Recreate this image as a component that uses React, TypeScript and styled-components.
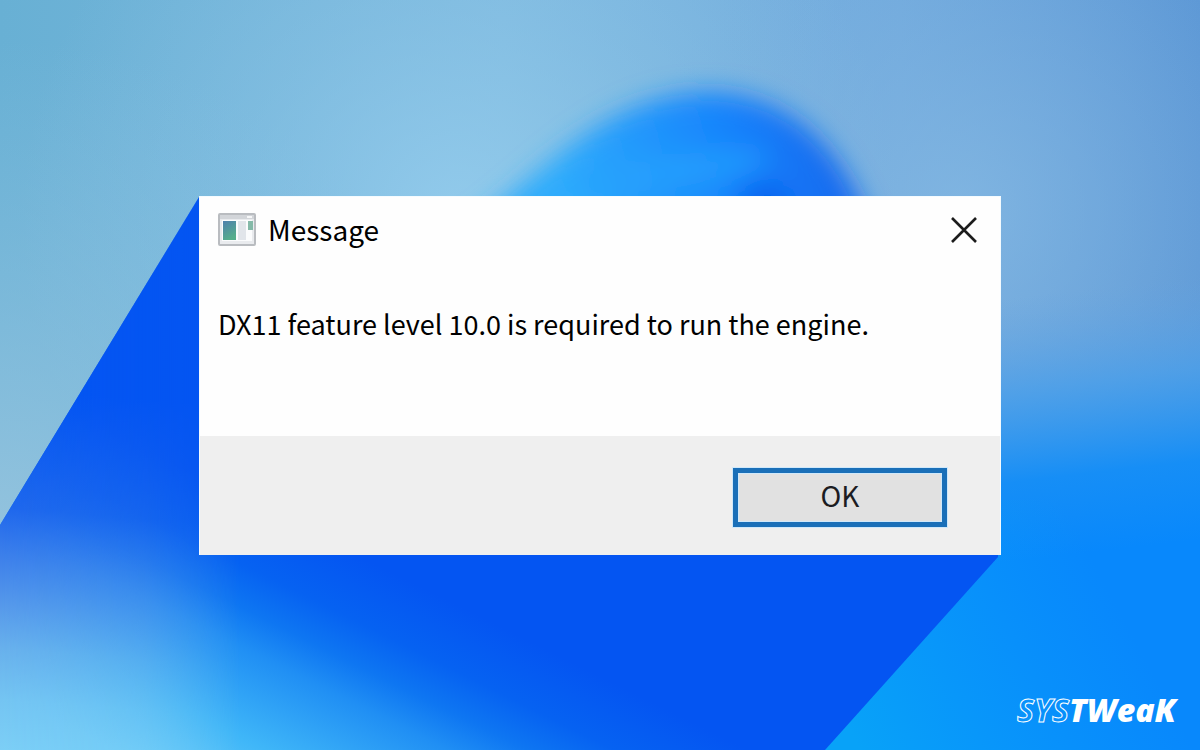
import React from "react";
import styled, { createGlobalStyle } from "styled-components";

const GlobalStyle = createGlobalStyle`
  * { box-sizing: border-box; }
  html, body, #root { height: 100%; }
  body { margin: 0; background: #7db3df; }
`;

const Desktop = styled.div`
  position: relative;
  isolation: isolate;
  min-height: 100%;
  display: grid;
  grid-template-columns: minmax(0, 1fr);
  grid-template-rows: minmax(80px, 1fr) auto minmax(80px, 1fr);
  justify-items: center;
  font-family: "Noto Sans CJK SC", "Open Sans", sans-serif;
  color: #000;
`;

const WallpaperArt = styled.svg`
  position: absolute;
  inset: 0;
  z-index: -1;
  width: 100%;
  height: 100%;
`;

const Dialog = styled.section`
  grid-row: 2;
  width: 100%;
  max-width: 802px;
  background: #fefefe;
  border: 1px solid #f4fbff;
  border-bottom: 0;
`;

const TitleBar = styled.header`
  display: flex;
  align-items: center;
  gap: 12px;
  height: 67px;
  padding: 0 22px 0 18px;
`;

const Title = styled.h1`
  flex: 1;
  margin: 0;
  padding-bottom: 2px;
  font-size: 28px;
  line-height: 36px;
  font-weight: 400;
`;

const CloseButton = styled.button`
  display: grid;
  place-items: center;
  padding: 0;
  border: 0;
  background: transparent;
  cursor: pointer;
`;

const Body = styled.div`
  padding: 42px 18px 94px;
`;

const Message = styled.p`
  margin: 0;
  font-size: 27px;
  line-height: 36px;
`;

const Actions = styled.footer`
  display: flex;
  justify-content: flex-end;
  padding: 32px 53px 28px;
  background: #efefef;
`;

const OkButton = styled.button`
  width: 214px;
  height: 59px;
  padding: 0 0 4px;
  border: 5px solid #1a6fb8;
  background: #e1e1e1;
  box-shadow: inset 0 0 0 1px #cfe8fa, 0 0 0 1px #cfe8fa;
  color: #1c1c22;
  font: 400 28px/36px "Noto Sans CJK SC", "Open Sans", sans-serif;
  cursor: pointer;
`;

const Brand = styled.div`
  grid-row: 3;
  align-self: end;
  justify-self: end;
  display: flex;
  align-items: baseline;
  padding: 0 24px 20px 0;
  color: #fff;
  font: italic 700 32px/40px "Open Sans", sans-serif;
`;

const BrandOutline = styled.span`
  color: transparent;
  -webkit-text-stroke: 1px #fff;
`;

const BrandSolid = styled.span`
  font-weight: 800;
`;

const Wallpaper = () => (
  <WallpaperArt viewBox="0 0 1200 750" preserveAspectRatio="xMidYMid slice" aria-hidden="true">
    <defs>
      <linearGradient id="sky" x1="0" y1="0" x2="1" y2="0">
        <stop offset="0" stopColor="#68b0d4" />
        <stop offset="0.42" stopColor="#7cb8df" />
        <stop offset="0.75" stopColor="#71aadd" />
        <stop offset="1" stopColor="#5e99d6" />
      </linearGradient>
      <radialGradient id="glow" gradientUnits="userSpaceOnUse" cx="460" cy="220" r="440">
        <stop offset="0" stopColor="#96ceee" stopOpacity="0.85" />
        <stop offset="0.5" stopColor="#90c8e8" stopOpacity="0.4" />
        <stop offset="1" stopColor="#8ec4e4" stopOpacity="0" />
      </radialGradient>
      <radialGradient id="glowLeft" gradientUnits="userSpaceOnUse" cx="0" cy="560" r="520">
        <stop offset="0" stopColor="#96c4de" />
        <stop offset="1" stopColor="#88c0e0" stopOpacity="0" />
      </radialGradient>
      <radialGradient id="glowRight" gradientUnits="userSpaceOnUse" cx="960" cy="210" r="320">
        <stop offset="0" stopColor="#84b8e2" stopOpacity="0.8" />
        <stop offset="1" stopColor="#7cb0e0" stopOpacity="0" />
      </radialGradient>
      <linearGradient id="sea" gradientUnits="userSpaceOnUse" x1="1080" y1="290" x2="1110" y2="550">
        <stop offset="0" stopColor="#64a4e2" stopOpacity="0" />
        <stop offset="0.35" stopColor="#4a9fea" stopOpacity="0.8" />
        <stop offset="0.7" stopColor="#168ef6" />
        <stop offset="1" stopColor="#0888fc" />
      </linearGradient>
      <linearGradient id="seaLow" gradientUnits="userSpaceOnUse" x1="860" y1="750" x2="1120" y2="610">
        <stop offset="0" stopColor="#08a2f8" />
        <stop offset="1" stopColor="#089cfa" stopOpacity="0" />
      </linearGradient>
      <linearGradient id="petal" gradientUnits="userSpaceOnUse" x1="560" y1="190" x2="850" y2="120">
        <stop offset="0" stopColor="#2eacfc" />
        <stop offset="0.6" stopColor="#1683fc" />
        <stop offset="1" stopColor="#1464ec" />
      </linearGradient>
      <linearGradient id="tide" gradientUnits="userSpaceOnUse" x1="-151" y1="302" x2="-284" y2="569">
        <stop offset="0" stopColor="#0455f2" />
        <stop offset="0.2" stopColor="#0662f2" />
        <stop offset="0.33" stopColor="#0e76f2" />
        <stop offset="0.45" stopColor="#208ff4" />
        <stop offset="0.72" stopColor="#3fb6f8" />
        <stop offset="0.95" stopColor="#66cdfa" />
      </linearGradient>
      <linearGradient id="shore" gradientUnits="userSpaceOnUse" x1="30" y1="390" x2="0" y2="750">
        <stop offset="0" stopColor="#0455f2" />
        <stop offset="0.33" stopColor="#1f66ec" />
        <stop offset="0.48" stopColor="#4082ea" />
        <stop offset="0.6" stopColor="#5698ea" />
        <stop offset="0.72" stopColor="#68b0ec" />
        <stop offset="0.86" stopColor="#74c4f2" />
        <stop offset="1" stopColor="#7ccef6" />
      </linearGradient>
      <linearGradient id="shoreFade" gradientUnits="userSpaceOnUse" x1="0" y1="0" x2="240" y2="0">
        <stop offset="0" stopColor="#fff" />
        <stop offset="0.25" stopColor="#fff" stopOpacity="0.85" />
        <stop offset="0.6" stopColor="#fff" stopOpacity="0.6" />
        <stop offset="1" stopColor="#fff" stopOpacity="0" />
      </linearGradient>
      <mask id="shoreMask" maskUnits="userSpaceOnUse" x="0" y="0" width="1200" height="750">
        <rect width="240" height="750" fill="url(#shoreFade)" />
      </mask>
      <filter id="soft" x="-30%" y="-30%" width="160%" height="160%">
        <feGaussianBlur stdDeviation="13" />
      </filter>
      <clipPath id="band">
        <path d="M199 197 L0 525 V750 H825 L998 557 V196 Z" />
      </clipPath>
    </defs>
    <rect width="1200" height="750" fill="url(#sky)" />
    <rect width="1200" height="750" fill="url(#glow)" />
    <rect width="1200" height="750" fill="url(#glowLeft)" />
    <rect width="1200" height="750" fill="url(#glowRight)" />
    <rect x="800" y="280" width="400" height="470" fill="url(#sea)" />
    <rect x="800" y="500" width="400" height="250" fill="url(#seaLow)" />
    <g filter="url(#soft)">
      <path d="M470 226 C545 175 600 95 708 92 C790 94 838 145 866 215 L880 270 H470 Z" fill="url(#petal)" />
      <ellipse cx="670" cy="172" rx="100" ry="16" fill="#26a2fe" opacity="0.7" transform="rotate(-8 670 172)" />
      <ellipse cx="764" cy="202" rx="28" ry="18" fill="#0462ee" />
    </g>
    <g clipPath="url(#band)">
      <rect width="1200" height="750" fill="url(#tide)" />
      <rect width="240" height="750" fill="url(#shore)" mask="url(#shoreMask)" />
    </g>
  </WallpaperArt>
);

const WindowIcon = () => (
  <svg width="38" height="34" viewBox="0 0 38 34" aria-hidden="true">
    <defs>
      <linearGradient id="pane" x1="0" y1="0" x2="0.4" y2="1">
        <stop offset="0" stopColor="#4f80ad" />
        <stop offset="1" stopColor="#55ae8c" />
      </linearGradient>
    </defs>
    <rect x="1" y="1" width="36" height="31" rx="1" fill="#e9ebee" stroke="#b9bcc0" strokeWidth="2" />
    <rect x="2" y="2" width="34" height="4" fill="#d2d5d9" />
    <rect x="4" y="7" width="30" height="21" fill="#fbfcfd" />
    <rect x="5" y="8" width="13" height="19" fill="url(#pane)" />
    <rect x="20" y="8" width="8" height="19" fill="#e1e5ea" />
    <rect x="30" y="8" width="5" height="9" fill="#84b9a8" />
    <rect x="29" y="3" width="5" height="2" fill="#f6f7f8" />
  </svg>
);

const CloseIcon = () => (
  <svg width="28" height="28" viewBox="0 0 28 28" aria-hidden="true">
    <path d="M2 2 L26 26 M26 2 L2 26" fill="none" stroke="#1c1c1c" strokeWidth="2.6" />
  </svg>
);

export default function App() {
  return (
    <>
      <GlobalStyle />
      <Desktop>
        <Wallpaper />
        <Dialog role="dialog" aria-labelledby="dialog-title" aria-describedby="dialog-message">
          <TitleBar>
            <WindowIcon />
            <Title id="dialog-title">Message</Title>
            <CloseButton type="button" aria-label="Close">
              <CloseIcon />
            </CloseButton>
          </TitleBar>
          <Body>
            <Message id="dialog-message">DX11 feature level 10.0 is required to run the engine.</Message>
          </Body>
          <Actions>
            <OkButton type="button">OK</OkButton>
          </Actions>
        </Dialog>
        <Brand>
          <BrandOutline>SYS</BrandOutline>
          <BrandSolid>TWeaK</BrandSolid>
        </Brand>
      </Desktop>
    </>
  );
}
